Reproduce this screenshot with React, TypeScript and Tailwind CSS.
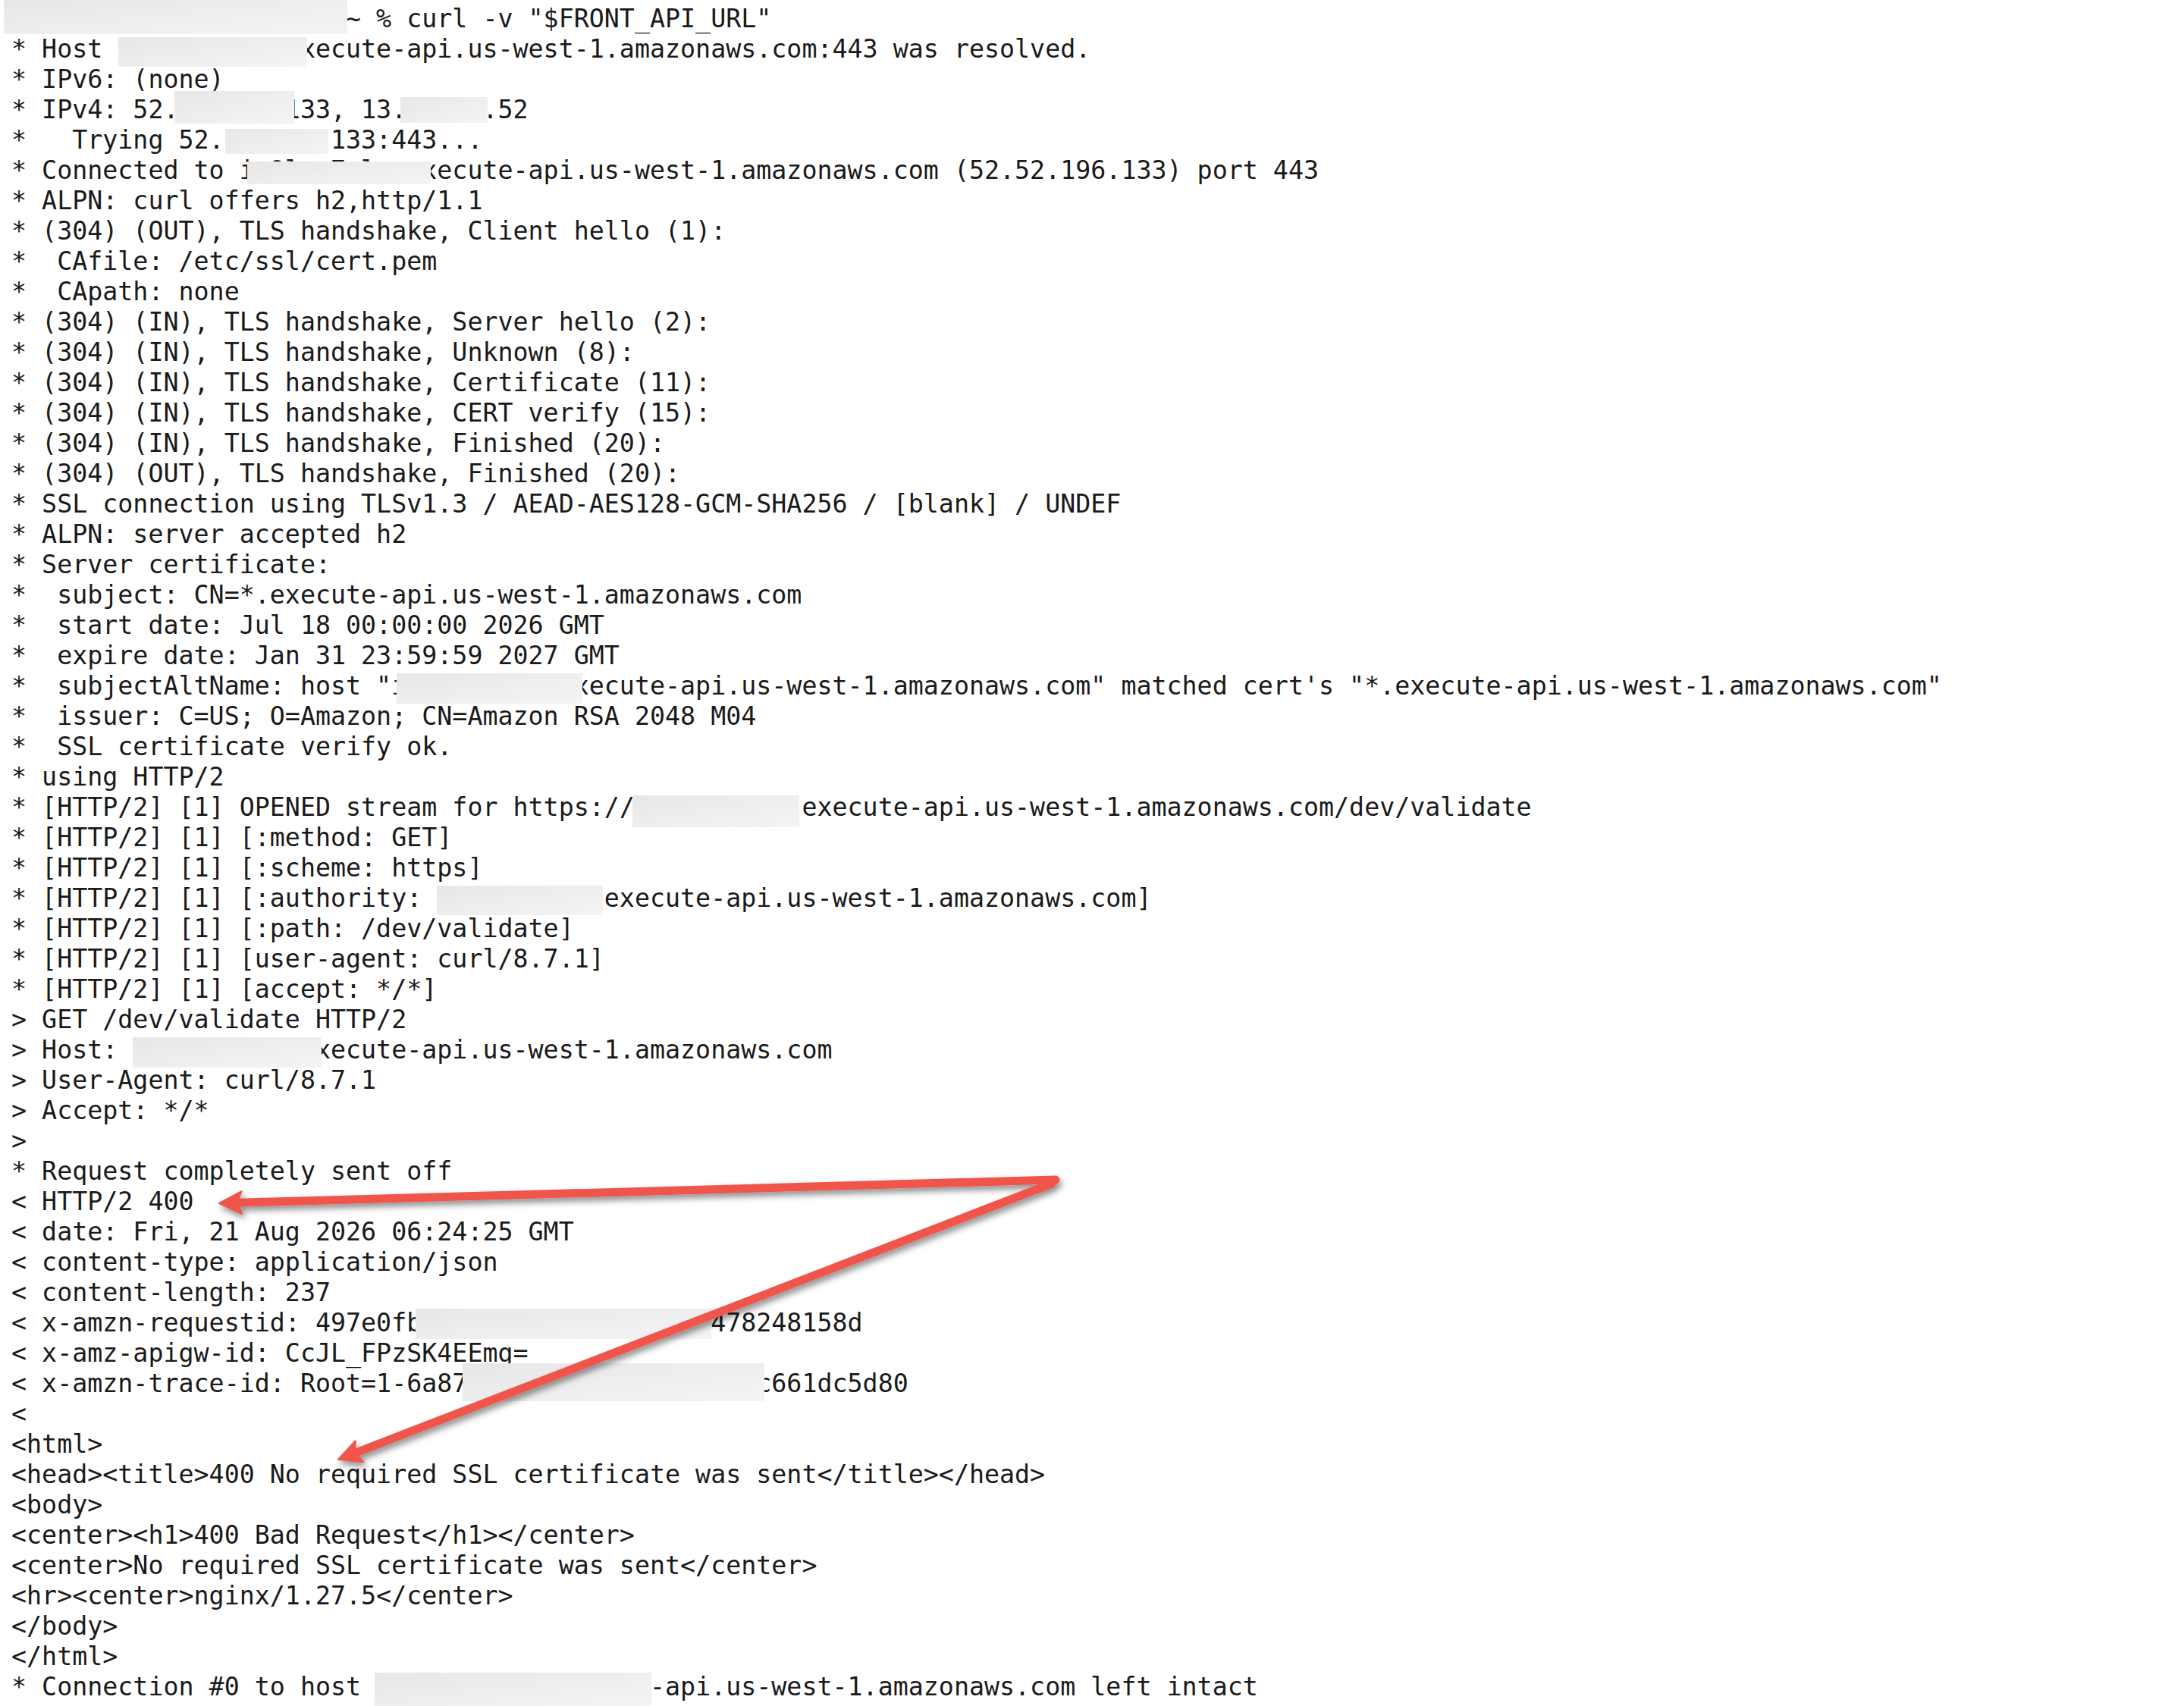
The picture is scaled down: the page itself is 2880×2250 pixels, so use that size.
import React from "react";

const ID = "ie9lxa7sle";
const HOST = `${ID}.execute-api.us-west-1.amazonaws.com`;

type Line = { text: string; boxes?: string[] };

const box =
  "absolute bg-linear-to-br from-[#e7e7e7] via-[#eeeeee] to-[#f4f4f4]";

// terminal output, one entry per row (40px rows, 20.05px columns)
const lines: Line[] = [
  {
    text: 'user@Users-MacBookPro ~ % curl -v "$FRONT_API_URL"',
    boxes: ["left-[5px] top-[-5px] w-[453px] h-[45px]"],
  },
  {
    text: `* Host ${HOST}:443 was resolved.`,
    boxes: ["left-[156px] top-[4px] w-[249px] h-[39px]"],
  },
  { text: "* IPv6: (none)" },
  {
    text: "* IPv4: 52.52.196.133, 13.57.18.52",
    boxes: [
      "left-[230px] top-[-5px] w-[158px] h-[43px]",
      "left-[528px] top-[3px] w-[115px] h-[34px]",
    ],
  },
  {
    text: "*   Trying 52.52.196.133:443...",
    boxes: ["left-[297px] top-[5px] w-[136px] h-[33px]"],
  },
  {
    text: `* Connected to ${HOST} (52.52.196.133) port 443`,
    boxes: ["left-[326px] top-[8px] w-[242px] h-[30px]"],
  },
  { text: "* ALPN: curl offers h2,http/1.1" },
  { text: "* (304) (OUT), TLS handshake, Client hello (1):" },
  { text: "*  CAfile: /etc/ssl/cert.pem" },
  { text: "*  CApath: none" },
  { text: "* (304) (IN), TLS handshake, Server hello (2):" },
  { text: "* (304) (IN), TLS handshake, Unknown (8):" },
  { text: "* (304) (IN), TLS handshake, Certificate (11):" },
  { text: "* (304) (IN), TLS handshake, CERT verify (15):" },
  { text: "* (304) (IN), TLS handshake, Finished (20):" },
  { text: "* (304) (OUT), TLS handshake, Finished (20):" },
  { text: "* SSL connection using TLSv1.3 / AEAD-AES128-GCM-SHA256 / [blank] / UNDEF" },
  { text: "* ALPN: server accepted h2" },
  { text: "* Server certificate:" },
  { text: "*  subject: CN=*.execute-api.us-west-1.amazonaws.com" },
  { text: "*  start date: Jul 18 00:00:00 2026 GMT" },
  { text: "*  expire date: Jan 31 23:59:59 2027 GMT" },
  {
    text: `*  subjectAltName: host "${HOST}" matched cert's "*.execute-api.us-west-1.amazonaws.com"`,
    boxes: ["left-[523px] top-[3px] w-[245px] h-[40px]"],
  },
  { text: "*  issuer: C=US; O=Amazon; CN=Amazon RSA 2048 M04" },
  { text: "*  SSL certificate verify ok." },
  { text: "* using HTTP/2" },
  {
    text: `* [HTTP/2] [1] OPENED stream for https://${HOST}/dev/validate`,
    boxes: ["left-[834px] top-[4px] w-[220px] h-[42px]"],
  },
  { text: "* [HTTP/2] [1] [:method: GET]" },
  { text: "* [HTTP/2] [1] [:scheme: https]" },
  {
    text: `* [HTTP/2] [1] [:authority: ${HOST}]`,
    boxes: ["left-[576px] top-[3px] w-[219px] h-[39px]"],
  },
  { text: "* [HTTP/2] [1] [:path: /dev/validate]" },
  { text: "* [HTTP/2] [1] [user-agent: curl/8.7.1]" },
  { text: "* [HTTP/2] [1] [accept: */*]" },
  { text: "> GET /dev/validate HTTP/2" },
  {
    text: `> Host: ${HOST}`,
    boxes: ["left-[175px] top-[3px] w-[249px] h-[40px]"],
  },
  { text: "> User-Agent: curl/8.7.1" },
  { text: "> Accept: */*" },
  { text: ">" },
  { text: "* Request completely sent off" },
  { text: "< HTTP/2 400" },
  { text: "< date: Fri, 21 Aug 2026 06:24:25 GMT" },
  { text: "< content-type: application/json" },
  { text: "< content-length: 237" },
  {
    text: "< x-amzn-requestid: 497e0fb3-2c4d-4a1e-9f6b-2e478248158d",
    boxes: ["left-[548px] top-[1px] w-[390px] h-[40px]"],
  },
  { text: "< x-amz-apigw-id: CcJL_FPzSK4EEmg=" },
  {
    text: "< x-amzn-trace-id: Root=1-6a87c1f2-3b9d0e4a7c5f18c661dc5d80",
    boxes: ["left-[610px] top-[-7px] w-[398px] h-[50px]"],
  },
  { text: "<" },
  { text: "<html>" },
  { text: "<head><title>400 No required SSL certificate was sent</title></head>" },
  { text: "<body>" },
  { text: "<center><h1>400 Bad Request</h1></center>" },
  { text: "<center>No required SSL certificate was sent</center>" },
  { text: "<hr><center>nginx/1.27.5</center>" },
  { text: "</body>" },
  { text: "</html>" },
  {
    text: `* Connection #0 to host ${HOST} left intact`,
    boxes: ["left-[494px] top-[1px] w-[365px] h-[44px]"],
  },
];

type Pt = [number, number];

function Arrow({ from, tip }: { from: Pt; tip: Pt }) {
  const dx = from[0] - tip[0];
  const dy = from[1] - tip[1];
  const len = Math.hypot(dx, dy);
  const ux = dx / len;
  const uy = dy / len;
  const px = -uy;
  const py = ux;
  const base: Pt = [tip[0] + ux * 30, tip[1] + uy * 30];
  const notch: Pt = [tip[0] + ux * 24, tip[1] + uy * 24];
  const b1: Pt = [base[0] + px * 15, base[1] + py * 15];
  const b2: Pt = [base[0] - px * 15, base[1] - py * 15];
  const pts = [tip, b1, notch, b2].map((p) => p.join(",")).join(" ");
  return (
    <g>
      <line
        x1={from[0]}
        y1={from[1]}
        x2={notch[0]}
        y2={notch[1]}
        stroke="#f0554b"
        strokeWidth={11}
        strokeLinecap="round"
      />
      <polygon points={pts} fill="#f0554b" stroke="#f0554b" strokeWidth={2} strokeLinejoin="round" />
    </g>
  );
}

export default function App() {
  return (
    <div className="relative min-h-screen w-full bg-white text-[#1a1a1a]">
      <div className="pt-[5px] font-['DejaVu_Sans_Mono',monospace] text-[33.3px] leading-[40px]">
        {lines.map((line, i) => (
          <div key={i} className="relative h-[40px] whitespace-pre pl-[15px]">
            {line.text}
            {line.boxes?.map((b, j) => (
              <span key={j} className={`${box} ${b}`} />
            ))}
          </div>
        ))}
      </div>

      {/* annotation arrows drawn over the output */}
      <svg
        className="pointer-events-none absolute top-0 left-0"
        width={2880}
        height={2250}
        viewBox="0 0 2880 2250"
      >
        <defs>
          <filter id="shadow" x="-10%" y="-10%" width="120%" height="120%">
            <feDropShadow dx="3" dy="5" stdDeviation="4" floodColor="#000" floodOpacity="0.45" />
          </filter>
        </defs>
        <g filter="url(#shadow)">
          <Arrow from={[1387, 1561]} tip={[446, 1925]} />
          <Arrow from={[1392, 1556]} tip={[289, 1587]} />
        </g>
      </svg>
    </div>
  );
}
